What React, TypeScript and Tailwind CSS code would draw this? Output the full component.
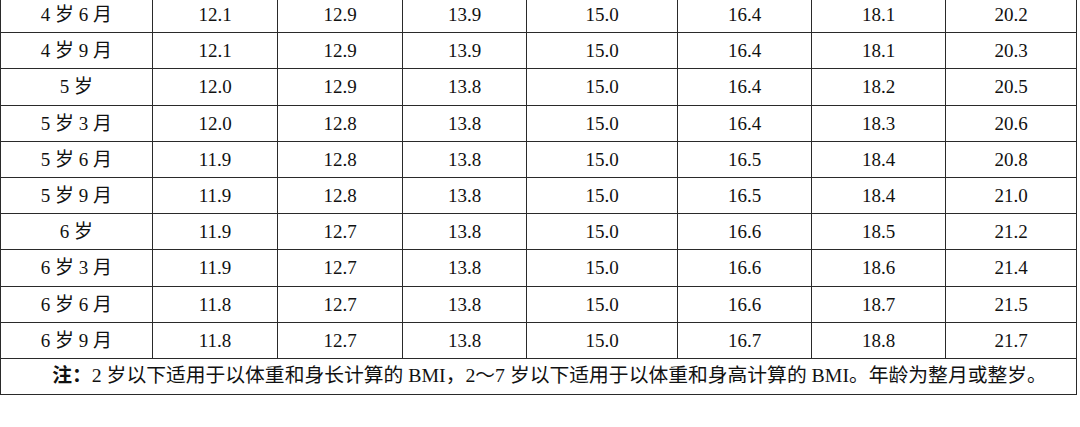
const rows: [string, string[]][] = [
  ['4 岁 6 月', ['12.1', '12.9', '13.9', '15.0', '16.4', '18.1', '20.2']],
  ['4 岁 9 月', ['12.1', '12.9', '13.9', '15.0', '16.4', '18.1', '20.3']],
  ['5 岁', ['12.0', '12.9', '13.8', '15.0', '16.4', '18.2', '20.5']],
  ['5 岁 3 月', ['12.0', '12.8', '13.8', '15.0', '16.4', '18.3', '20.6']],
  ['5 岁 6 月', ['11.9', '12.8', '13.8', '15.0', '16.5', '18.4', '20.8']],
  ['5 岁 9 月', ['11.9', '12.8', '13.8', '15.0', '16.5', '18.4', '21.0']],
  ['6 岁', ['11.9', '12.7', '13.8', '15.0', '16.6', '18.5', '21.2']],
  ['6 岁 3 月', ['11.9', '12.7', '13.8', '15.0', '16.6', '18.6', '21.4']],
  ['6 岁 6 月', ['11.8', '12.7', '13.8', '15.0', '16.6', '18.7', '21.5']],
  ['6 岁 9 月', ['11.8', '12.7', '13.8', '15.0', '16.7', '18.8', '21.7']],
];

const widths = [152, 125, 125, 124, 151, 134, 134, 131];

export default function App() {
  return (
    <div className="w-[1080px] h-[427px] overflow-hidden bg-white text-[#111] font-['Liberation_Serif','Noto_Sans_CJK_SC',serif] text-[19px]">
      <table className="-mt-[4px] border-collapse table-fixed w-[1076px]">
        <colgroup>
          {widths.map((w, i) => (
            <col key={i} style={{ width: w }} />
          ))}
        </colgroup>
        <tbody>
          {rows.map(([age, vals]) => (
            <tr key={age} className="h-[36.2px]">
              <td className="border border-[#2a2a2a] text-center p-0 leading-none whitespace-pre">{age}</td>
              {vals.map((v, i) => (
                <td key={i} className="border border-[#2a2a2a] text-center p-0 leading-none">
                  {v}
                </td>
              ))}
            </tr>
          ))}
          <tr className="h-[36px]">
            <td colSpan={8} className="border border-[#2a2a2a] text-center p-0 pl-[22px] leading-none whitespace-nowrap text-[19.8px]">
              <span className="font-bold">注：</span>2 岁以下适用于以体重和身长计算的 BMI，2～7 岁以下适用于以体重和身高计算的 BMI。年龄为整月或整岁。
            </td>
          </tr>
        </tbody>
      </table>
    </div>
  );
}
